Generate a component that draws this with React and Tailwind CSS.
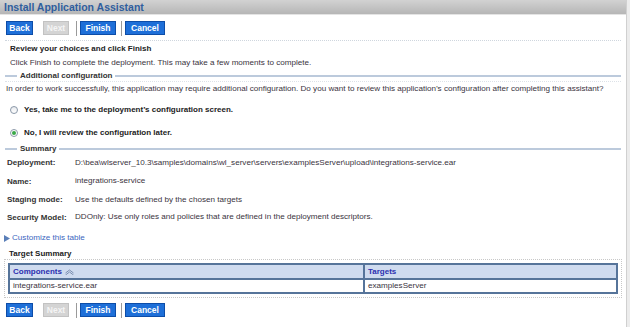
import React from 'react';

const font = { fontFamily: '"Liberation Sans", Arial, sans-serif' };

const Buttons = () => (
  <div className="flex items-center h-[14px] pl-[6px]">
    <button className="h-[14px] w-[27px] bg-[#1e6fd8] border border-[#0d4da8] text-white text-[8.5px] font-bold leading-none">Back</button>
    <button className="ml-[10px] h-[14px] w-[26px] bg-[#d4d4d4] border border-[#c2c2c2] text-[#f4f4f4] text-[8.5px] font-bold leading-none">Next</button>
    <span className="ml-[7px] w-px h-[15px] bg-[#9a9a9a]"></span>
    <button className="ml-[3px] h-[14px] w-[36px] bg-[#1e6fd8] border border-[#0d4da8] text-white text-[8.5px] font-bold leading-none">Finish</button>
    <span className="ml-[5px] w-px h-[15px] bg-[#9a9a9a]"></span>
    <button className="ml-[3px] h-[14px] w-[40px] bg-[#1e6fd8] border border-[#0d4da8] text-white text-[8.5px] font-bold leading-none">Cancel</button>
  </div>
);

const Legend = ({ title }) => (
  <div className="flex items-center h-[10px] px-[5px]">
    <span className="w-[12px] h-[2px] bg-[#bccadc]"></span>
    <span className="px-[3px] text-[8px] font-bold text-[#333] leading-none">{title}</span>
    <span className="flex-1 h-[2px] bg-[#bccadc]"></span>
  </div>
);

const Row = ({ label, value, h }) => (
  <div className={`flex items-center ${h} leading-none`}>
    <span className="w-[75px] pl-[7px] shrink-0 text-[8px] font-bold text-[#333] whitespace-nowrap">{label}</span>
    <span className="text-[8.1px] text-[#3a3340] whitespace-nowrap">{value}</span>
  </div>
);

export default function App() {
  return (
    <div className="flex w-[630px] h-[327px] bg-white overflow-hidden" style={font}>
      <div className="w-[626px] flex flex-col">
        {/* Header */}
        <div className="h-[15px] bg-gradient-to-b from-[#d2d2d2] to-[#b6b6b6] border-b border-[#e4e4e4] flex items-center pl-[4px]">
          <span className="text-[10.5px] font-bold text-[#2f5e9e] leading-none">Install Application Assistant</span>
        </div>

        <div className="mt-[6px]">
          <Buttons />
        </div>

        <div className="mt-[5px] mx-[5px] border-t border-dotted border-[#cfd6de]"></div>

        <div className="h-[15px] flex items-center pl-[10px] text-[8px] font-bold text-[#222] leading-none">
          Review your choices and click Finish
        </div>
        <div className="h-[14px] flex items-center pl-[10px] text-[8.1px] text-[#3a3340] leading-none">
          Click Finish to complete the deployment. This may take a few moments to complete.
        </div>

        <div className="mt-[1px]">
          <Legend title="Additional configuration" />
        </div>
        <div className="mx-[5px] border-t border-dotted border-[#dde2e8]"></div>
        <div className="h-[14px] flex items-center pl-[6px] text-[8.1px] text-[#3a3340] leading-none whitespace-nowrap">
          In order to work successfully, this application may require additional configuration. Do you want to review this application&#8217;s configuration after completing this assistant?
        </div>

        <div className="mt-[8px] h-[12px] flex items-center pl-[10px]">
          <span className="w-[8px] h-[8px] rounded-full border border-[#8a98a8] bg-gradient-to-b from-[#e8eaee] to-white"></span>
          <span className="ml-[6px] text-[8px] font-bold text-[#222] leading-none">Yes, take me to the deployment&#8217;s configuration screen.</span>
        </div>
        <div className="mt-[11px] h-[12px] flex items-center pl-[10px]">
          <span className="w-[8px] h-[8px] rounded-full border border-[#8a98a8] bg-white flex items-center justify-center">
            <span className="w-[4px] h-[4px] rounded-full bg-[#3aa848]"></span>
          </span>
          <span className="ml-[6px] text-[8px] font-bold text-[#222] leading-none">No, I will review the configuration later.</span>
        </div>

        <div className="mt-[5px]">
          <Legend title="Summary" />
        </div>

        <div className="flex flex-col">
          <Row h="h-[18px]" label="Deployment:" value="D:\bea\wlserver_10.3\samples\domains\wl_server\servers\examplesServer\upload\integrations-service.ear" />
          <Row h="h-[19px]" label="Name:" value="integrations-service" />
          <Row h="h-[18px]" label="Staging mode:" value="Use the defaults defined by the chosen targets" />
          <Row h="h-[17px]" label="Security Model:" value="DDOnly: Use only roles and policies that are defined in the deployment descriptors." />
        </div>

        <div className="mt-[6px] h-[12px] flex items-center pl-[4px]">
          <svg width="6" height="7" viewBox="0 0 6 7">
            <path d="M0 0 L6 3.5 L0 7 Z" fill="#5a7fb8" />
          </svg>
          <span className="ml-[2px] text-[8.1px] text-[#3b66c0] leading-none">Customize this table</span>
        </div>

        <div className="mt-[5px] h-[10px] flex items-center pl-[9px] text-[8px] font-bold text-[#222] leading-none">
          Target Summary
        </div>

        <div className="mx-[4px] w-[618px] border border-dotted border-[#c8c8c8] p-[3px]">
          <div className="border-2 border-[#56749a]">
            <div className="flex h-[15px] bg-[#cfdbef] border-b-2 border-[#56749a]">
              <div className="w-[355px] flex items-center pl-[3px] border-r-2 border-[#56749a]">
                <span className="text-[8px] font-bold text-[#2b2fb0] leading-none">Components</span>
                <svg className="ml-[3px]" width="9" height="6" viewBox="0 0 9 6">
                  <path d="M0.5 4 L4.5 1 L8.5 4" stroke="#7b8fb0" strokeWidth="1" fill="none" />
                  <path d="M0.5 6 L4.5 3 L8.5 6" stroke="#7b8fb0" strokeWidth="1" fill="none" />
                </svg>
              </div>
              <div className="flex-1 flex items-center pl-[3px]">
                <span className="text-[8px] font-bold text-[#2b2fb0] leading-none">Targets</span>
              </div>
            </div>
            <div className="flex h-[12px] bg-white">
              <div className="w-[355px] flex items-center pl-[3px] border-r-2 border-[#56749a] text-[8.1px] text-[#3a3340] leading-none">integrations-service.ear</div>
              <div className="flex-1 flex items-center pl-[3px] text-[8.1px] text-[#3a3340] leading-none">examplesServer</div>
            </div>
          </div>
        </div>

        <div className="mt-[5px]">
          <Buttons />
        </div>
      </div>
      <div className="w-[4px] bg-[#ececec] border-l border-[#d0d0d0]"></div>
    </div>
  );
}
